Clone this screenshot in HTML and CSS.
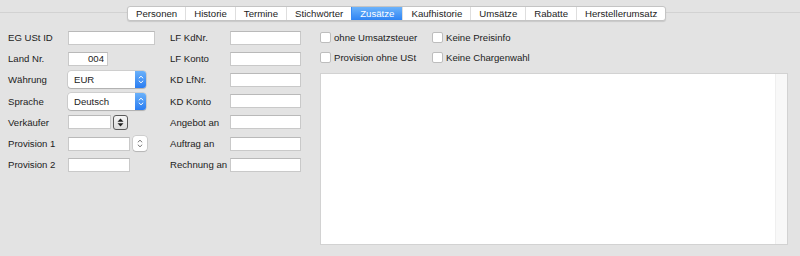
FILE: index.html
```html
<!DOCTYPE html>
<html>
<head>
    <title>Kunde - Zusätze</title>
    <link rel="stylesheet" href="styles.css">
</head>
<body>
    <div class="tabview">
        <div class="tabs">
            <div class="tab">Personen</div>
            <div class="tab">Historie</div>
            <div class="tab">Termine</div>
            <div class="tab">Stichwörter</div>
            <div class="tab active">Zusätze</div>
            <div class="tab">Kaufhistorie</div>
            <div class="tab">Umsätze</div>
            <div class="tab">Rabatte</div>
            <div class="tab">Herstellerumsatz</div>
        </div>

        <div class="content">
            <div class="form-grid">
                <label>EG USt ID</label>
                <div class="ctrl"><input type="text" class="w87"></div>
                <label>LF KdNr.</label>
                <div class="ctrl"><input type="text" class="w71"></div>

                <label>Land Nr.</label>
                <div class="ctrl"><input type="text" class="w40 right" value="004"></div>
                <label>LF Konto</label>
                <div class="ctrl"><input type="text" class="w71"></div>

                <label>Währung</label>
                <div class="ctrl">
                    <div class="popup"><span>EUR</span><span class="popup-arrow"><svg width="6" height="9" viewBox="0 0 6 9"><path d="M0.8 3.3 L3 1.2 L5.2 3.3 M0.8 5.7 L3 7.8 L5.2 5.7" fill="none" stroke="#fff" stroke-width="1"/></svg></span></div>
                </div>
                <label>KD LfNr.</label>
                <div class="ctrl"><input type="text" class="w71"></div>

                <label>Sprache</label>
                <div class="ctrl">
                    <div class="popup"><span>Deutsch</span><span class="popup-arrow"><svg width="6" height="9" viewBox="0 0 6 9"><path d="M0.8 3.3 L3 1.2 L5.2 3.3 M0.8 5.7 L3 7.8 L5.2 5.7" fill="none" stroke="#fff" stroke-width="1"/></svg></span></div>
                </div>
                <label>KD Konto</label>
                <div class="ctrl"><input type="text" class="w71"></div>

                <label>Verkäufer</label>
                <div class="ctrl">
                    <input type="text" class="w43">
                    <span class="combo-btn"><svg width="7" height="9" viewBox="0 0 7 9"><path d="M3.5 0.5 L6.5 3.8 L0.5 3.8 Z M3.5 8.5 L6.5 5.2 L0.5 5.2 Z" fill="#222"/></svg></span>
                </div>
                <label>Angebot an</label>
                <div class="ctrl"><input type="text" class="w71"></div>

                <label>Provision 1</label>
                <div class="ctrl">
                    <input type="text" class="w62">
                    <span class="stepper"><svg width="6" height="9" viewBox="0 0 6 9"><path d="M0.8 3.3 L3 1.2 L5.2 3.3 M0.8 5.7 L3 7.8 L5.2 5.7" fill="none" stroke="#777" stroke-width="1"/></svg></span>
                </div>
                <label>Auftrag an</label>
                <div class="ctrl"><input type="text" class="w71"></div>

                <label>Provision 2</label>
                <div class="ctrl"><input type="text" class="w62"></div>
                <label>Rechnung an</label>
                <div class="ctrl"><input type="text" class="w71"></div>
            </div>

            <div class="right-panel">
                <div class="checks">
                    <div class="check"><span class="box"></span>ohne Umsatzsteuer</div>
                    <div class="check"><span class="box"></span>Keine Preisinfo</div>
                    <div class="check"><span class="box"></span>Provision ohne USt</div>
                    <div class="check"><span class="box"></span>Keine Chargenwahl</div>
                </div>
                <div class="textbox">
                    <div class="text-area"></div>
                    <div class="scroll-track"></div>
                </div>
            </div>
        </div>
    </div>
</body>
</html>
```

FILE: styles.css
```css
body {
    margin: 0;
    background-color: #e3e3e3;
    font-family: "Liberation Sans", Arial, sans-serif;
    font-size: 9.6px;
    color: #1c1c1c;
    width: 800px;
    height: 256px;
    overflow: hidden;
}
.tabview {
    margin-top: 12px;
    border-top: 1px solid #d2d2d2;
}
.tabs {
    display: flex;
    width: max-content;
    margin: -7px 0 0 127px;
    background-color: #fff;
    border: 1px solid #c4c4c4;
    border-radius: 3px;
    box-shadow: 0 1px 1px rgba(0, 0, 0, 0.12);
    overflow: hidden;
}
.tab {
    height: 13px;
    line-height: 13px;
    padding: 0 8px;
    border-left: 1px solid #dedede;
    font-size: 9.65px;
}
.tab:first-child {
    border-left: none;
}
.tab.active {
    background: linear-gradient(#6cb3fa, #2f84f4);
    color: #fff;
    border-left-color: #3a8cf4;
}
.content {
    display: flex;
    padding: 6px 0 0 8px;
}
.form-grid {
    display: grid;
    grid-template-columns: 60px 102px 60px 71px;
    grid-auto-rows: 21.2px;
    align-items: center;
}
label {
    white-space: nowrap;
}
.ctrl {
    display: flex;
    align-items: center;
}
input {
    box-sizing: border-box;
    height: 14px;
    padding: 0 3px;
    margin: 0;
    border: 1px solid #c9c9c9;
    border-top-color: #b9b9b9;
    background-color: #fff;
    font-family: inherit;
    font-size: 9.6px;
    color: #1c1c1c;
    outline: none;
}
.w87 { width: 87px; }
.w71 { width: 71px; }
.w62 { width: 62px; }
.w43 { width: 43px; }
.w40 { width: 40px; }
.right { text-align: right; }
.popup {
    display: flex;
    width: 78px;
    height: 17px;
    box-sizing: border-box;
    background-color: #fff;
    border-radius: 3px;
    box-shadow: 0 0 0 0.5px rgba(0, 0, 0, 0.18), 0 1px 1px rgba(0, 0, 0, 0.15);
    overflow: hidden;
}
.popup span:first-child {
    flex: 1;
    line-height: 17px;
    padding-left: 6px;
}
.popup-arrow {
    width: 11px;
    display: flex;
    align-items: center;
    justify-content: center;
    background: linear-gradient(#6ab1fa, #2a7df2);
}
.combo-btn {
    box-sizing: border-box;
    width: 15px;
    height: 15px;
    margin-left: 2px;
    border: 1px solid #5a5a5a;
    border-radius: 3px;
    background: linear-gradient(#f6f6f6, #dcdcdc);
    display: flex;
    align-items: center;
    justify-content: center;
}
.stepper {
    box-sizing: border-box;
    width: 14px;
    height: 15px;
    margin-left: 3px;
    border-radius: 3px;
    background-color: #fff;
    box-shadow: 0 0 0 0.5px rgba(0, 0, 0, 0.18), 0 1px 1px rgba(0, 0, 0, 0.12);
    display: flex;
    align-items: center;
    justify-content: center;
}
.right-panel {
    margin-left: 19px;
    width: 468px;
}
.checks {
    display: grid;
    grid-template-columns: 112px 1fr;
    grid-auto-rows: 20.5px;
    align-items: center;
}
.check {
    display: flex;
    align-items: center;
    white-space: nowrap;
}
.box {
    box-sizing: border-box;
    width: 11px;
    height: 11px;
    margin-right: 3px;
    background-color: #fff;
    border: 1px solid #bdbdbd;
    border-radius: 2px;
}
.textbox {
    display: flex;
    height: 172px;
    margin-top: 5px;
    border: 1px solid #d2d2d2;
    box-sizing: border-box;
    background-color: #fff;
}
.text-area {
    flex: 1;
}
.scroll-track {
    width: 11px;
    background-color: #f8f8f8;
    border-left: 1px solid #efefef;
}
```
